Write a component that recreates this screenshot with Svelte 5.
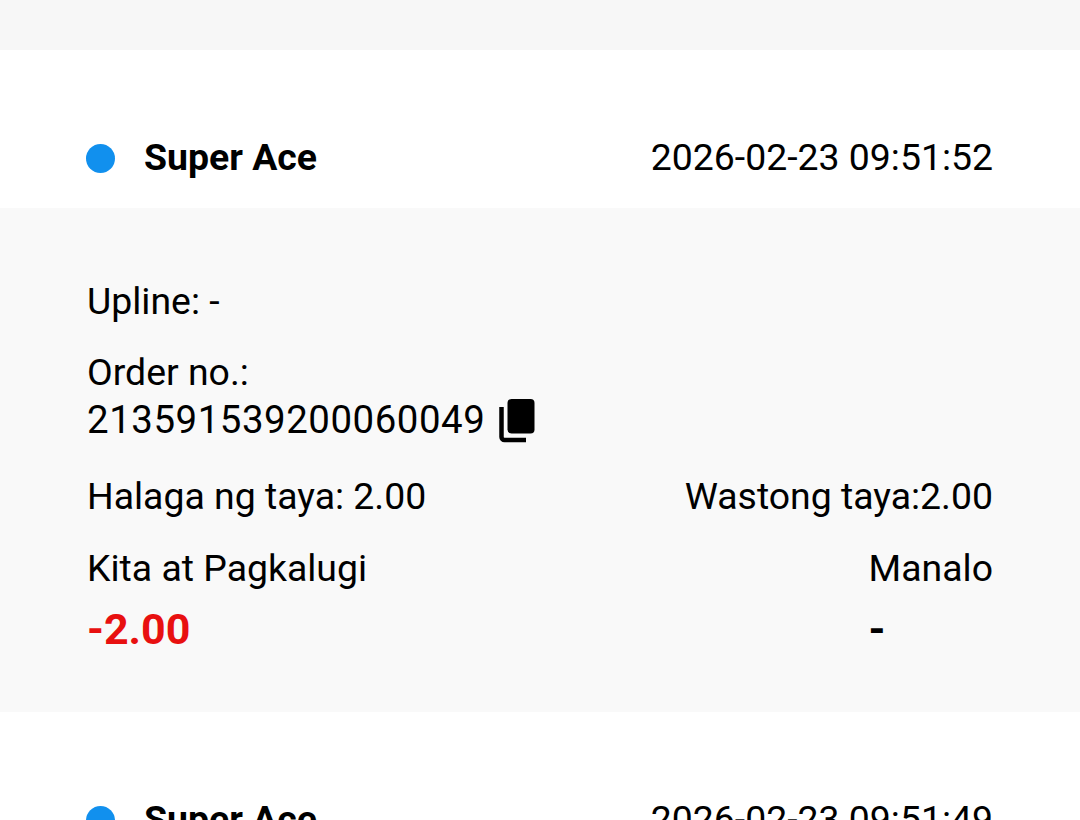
<script>
  const rows = [
    { time: '2026-02-23 09:51:52', detail: true },
    { time: '2026-02-23 09:51:49', detail: false }
  ];
</script>

<div class="page">
  <div class="top"></div>
  {#each rows as row}
    <section class="item">
      <header class="head">
        <div class="name"><span class="dot"></span><strong>Super Ace</strong></div>
        <span class="time">{row.time}</span>
      </header>
      {#if row.detail}
        <div class="detail">
          <p class="line">Upline: -</p>
          <div class="order">
            <div>Order no.:</div>
            <div class="num">
              <span class="digits">213591539200060049</span>
              <svg class="copy" viewBox="0 0 39 45" width="39" height="45" aria-hidden="true">
                <rect x="9.500" y="1" width="27" height="34.500" rx="4" />
                <path class="back" d="M3.500 9V39a3 3 0 0 0 3 3H28" />
              </svg>
            </div>
          </div>
          <div class="split">
            <span>Halaga ng taya: 2.00</span>
            <span>Wastong taya:2.00</span>
          </div>
          <div class="split result">
            <div>
              <div>Kita at Pagkalugi</div>
              <div class="big red">-2.00</div>
            </div>
            <div>
              <div>Manalo</div>
              <div class="big">-</div>
            </div>
          </div>
        </div>
      {/if}
    </section>
  {/each}
</div>

<style>
  :global(body) {
    margin: 0;
    background: #fff;
  }
  .page {
    height: 820px;
    overflow: hidden;
    font-family: Roboto, "Liberation Sans", sans-serif;
    font-size: 37.4px;
    line-height: 48px;
    color: #000;
  }
  .top {
    height: 50px;
    background: #f7f7f7;
  }
  .head {
    height: 158px;
    box-sizing: border-box;
    padding: 84px 87px 0 86px;
    display: flex;
    justify-content: space-between;
    align-items: flex-start;
  }
  .name {
    display: flex;
    align-items: center;
    gap: 29px;
  }
  .name strong {
    margin-top: -1px;
  }
  .time {
    margin-top: -1px;
  }
  .dot {
    width: 29px;
    height: 29px;
    margin-top: 2px;
    border-radius: 50%;
    background: #1190ee;
  }
  strong {
    font-weight: 700;
  }
  .detail {
    height: 504px;
    box-sizing: border-box;
    background: #f9f9f9;
    padding: 69px 87px 0;
  }
  .line {
    margin: 0 0 23px;
  }
  .order {
    margin-bottom: 28px;
  }
  .num {
    display: flex;
    align-items: center;
    gap: 13px;
  }
  .digits {
    font-size: 38.4px;
    letter-spacing: 0.55px;
  }
  .copy {
    fill: #000;
  }
  .back {
    fill: none;
    stroke: #000;
    stroke-width: 4.500;
  }
  .split {
    display: flex;
    justify-content: space-between;
    margin-bottom: 24px;
  }
  .big {
    font-size: 43px;
    font-weight: 700;
    line-height: 60px;
    margin-top: 7px;
  }
  .red {
    color: #e81010;
  }
</style>
